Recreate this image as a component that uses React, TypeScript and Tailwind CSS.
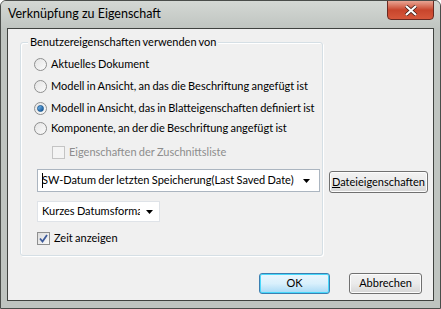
import React from 'react';

const font = { fontFamily: 'Lato, "Noto Sans", sans-serif' };

function Radio({ checked, label }: { checked?: boolean; label: string }) {
  return (
    <div className="flex items-center h-[16px] whitespace-nowrap">
      <span className="w-[13px] h-[13px] shrink-0 rounded-full border border-[#8e8f8f] bg-gradient-to-br from-[#e4e4e4] to-[#fbfbfb] flex items-center justify-center">
        {checked && (
          <span className="w-[7px] h-[7px] rounded-full bg-gradient-to-br from-[#7bc1f2] to-[#0b4d92] border border-[#1d5c94]" />
        )}
      </span>
      <span className="ml-[4px]">{label}</span>
    </div>
  );
}

function Check({ checked, disabled, label }: { checked?: boolean; disabled?: boolean; label: string }) {
  return (
    <div className={'flex items-center h-[16px] whitespace-nowrap ' + (disabled ? 'text-[#8d8d8d]' : '')}>
      <span
        className={
          'w-[13px] h-[13px] shrink-0 border flex items-center justify-center ' +
          (disabled ? 'border-[#c4c4c4] bg-[#f4f4f4]' : 'border-[#8e8f8f] bg-gradient-to-br from-[#dcdcdc] to-[#fafafa]')
        }
      >
        {checked && (
          <svg width="9" height="9" viewBox="0 0 9 9">
            <path d="M1 4.5 L3.5 7.5 L8 1" stroke="#3d5a9a" strokeWidth="1.8" fill="none" />
          </svg>
        )}
      </span>
      <span className="ml-[4px]">{label}</span>
    </div>
  );
}

function Arrow() {
  return (
    <svg width="7" height="4" viewBox="0 0 7 4" className="shrink-0">
      <path d="M0 0 H7 L3.5 4 Z" fill="#000" />
    </svg>
  );
}

export default function App() {
  return (
    <div style={font} className="w-[441px] h-[309px] bg-[#bfc4c0] text-[11px] [word-spacing:-0.5px] text-black relative overflow-hidden border border-[#4a4d4a] rounded-t-[6px]">
      <div className="h-[27px] flex items-center pl-[7px] text-[12.5px] [word-spacing:0] bg-gradient-to-b from-[#d4d8d4] to-[#c0c5c1]">
        Verknüpfung zu Eigenschaft
      </div>
      <div className="absolute right-[6px] top-[-1px] w-[47px] h-[20px] rounded-b-[4px] border border-[#6a2a22] bg-gradient-to-b from-[#e8a493] via-[#c8452c] to-[#d6573b] flex items-center justify-center">
        <svg width="14" height="11" viewBox="0 0 14 11">
          <path d="M2 1 L12 10 M12 1 L2 10" stroke="#3a1a14" strokeWidth="3.6" />
          <path d="M2 1 L12 10 M12 1 L2 10" stroke="#fff" strokeWidth="2.2" />
        </svg>
      </div>
      <div className="mx-[6px] h-[273px] border border-[#3f423f] bg-[#f0f0f0] flex flex-col">
        <div className="flex pl-[12px]">
          <div className="relative shrink-0 mt-[13px] w-[303px] h-[214px] border border-[#d5dfe5] rounded-[3px] shadow-[inset_1px_1px_0_#fff,1px_1px_0_#fff]">
            <span className="absolute top-[-9px] left-[7px] px-[2px] bg-[#f0f0f0] whitespace-nowrap">
              Benutzereigenschaften verwenden von
            </span>
            <div className="pl-[13px] pt-[13px] flex flex-col">
              <Radio label="Aktuelles Dokument" />
              <div className="h-[6px]" />
              <Radio label="Modell in Ansicht, an das die Beschriftung angefügt ist" />
              <div className="h-[6px]" />
              <Radio checked label="Modell in Ansicht, das in Blatteigenschaften definiert ist" />
              <div className="h-[4px]" />
              <Radio label="Komponente, an der die Beschriftung angefügt ist" />
              <div className="pl-[18px] mt-[8px]">
                <Check disabled label="Eigenschaften der Zuschnittsliste" />
              </div>
              <div className="mt-[9px] ml-[3px] w-[283px] h-[23px] border border-[#abb5c0] bg-white flex items-center pl-[4px] pr-[9px]">
                <span className="w-[1px] h-[15px] bg-black mr-[-1px] shrink-0" />
                <span className="flex-1 whitespace-nowrap overflow-hidden">SW-Datum der letzten Speicherung(Last Saved Date)</span>
                <Arrow />
              </div>
              <div className="mt-[9px] ml-[3px] w-[123px] h-[21px] border border-[#dfe3e8] bg-white flex items-center pl-[4px] pr-[6px]">
                <span className="flex-1 whitespace-nowrap overflow-hidden">Kurzes Datumsformat</span>
                <span className="ml-[6px]"><Arrow /></span>
              </div>
              <div className="mt-[8px] ml-[3px]">
                <Check checked label="Zeit anzeigen" />
              </div>
            </div>
          </div>
          <div className="ml-[6px] mt-[142px]">
            <button className="w-[99px] h-[22px] whitespace-nowrap rounded-[3px] border border-[#707070] bg-gradient-to-b from-[#f2f2f2] via-[#ebebeb] to-[#d6d6d6] shadow-[inset_0_0_0_1px_#fcfcfc]">
              <span className="underline">D</span>ateieigenschaften
            </button>
          </div>
        </div>
        <div className="flex justify-end pr-[11px] mt-[17px] gap-[19px]">
          <button className="w-[71px] h-[21px] rounded-[3px] border border-[#3c7fb1] bg-gradient-to-b from-[#eaf6fd] via-[#d9f0fc] to-[#a7d9f5] shadow-[inset_0_0_0_1px_#48d8fb]">
            OK
          </button>
          <button className="w-[73px] h-[21px] rounded-[3px] border border-[#707070] bg-gradient-to-b from-[#f2f2f2] via-[#ebebeb] to-[#d6d6d6] shadow-[inset_0_0_0_1px_#fcfcfc]">
            Abbrechen
          </button>
        </div>
      </div>
    </div>
  );
}
